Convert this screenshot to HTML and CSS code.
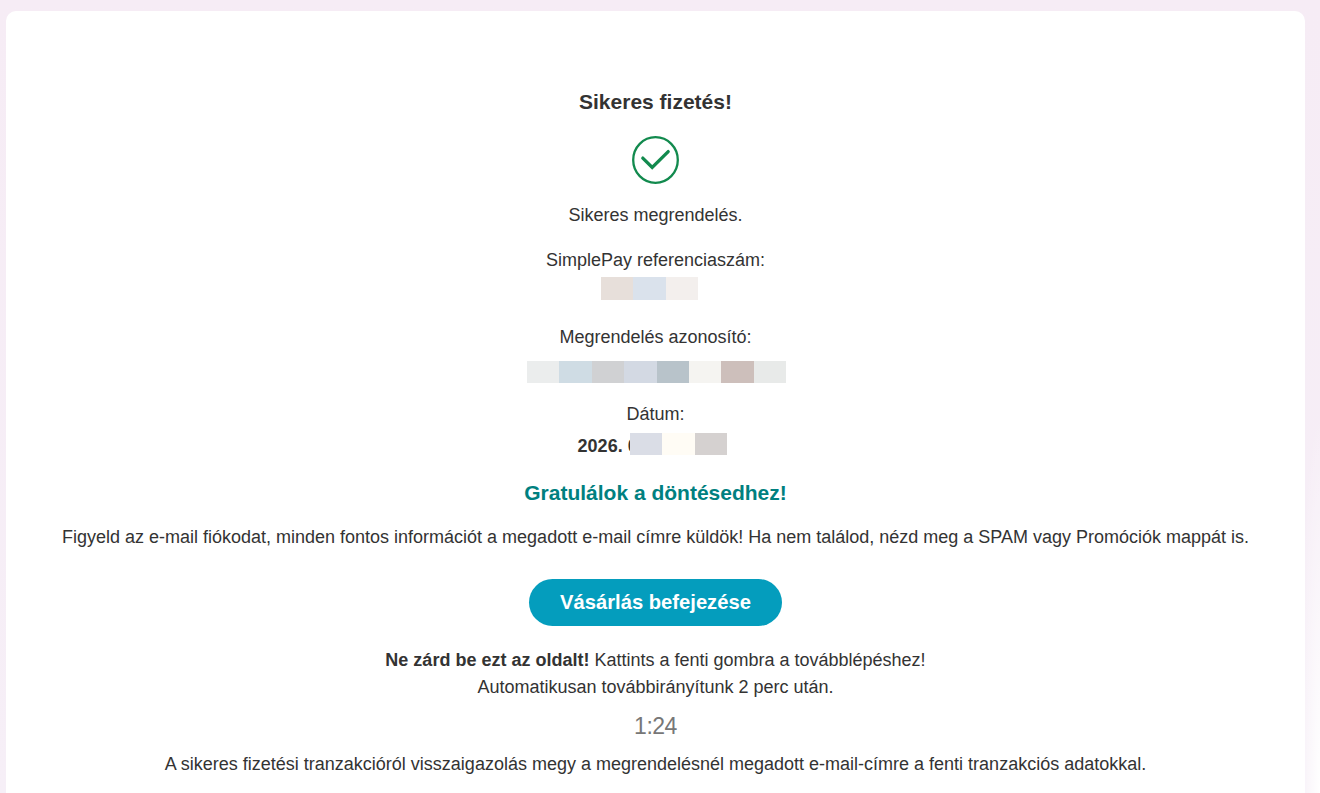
FILE: index.html
```
<!DOCTYPE html>
<html lang="hu">
<head>
  <meta charset="UTF-8">
  <meta name="viewport" content="width=device-width, initial-scale=1.0">
  <title>Sikeres fizetés</title>
  <link rel="stylesheet" href="styles.css">
</head>
<body>
  <main class="card">
    <h2 class="title">Sikeres fizetés!</h2>
    <svg class="check-icon" width="47" height="48" viewBox="0 0 47 48" fill="none">
      <ellipse cx="23.5" cy="24" rx="22.3" ry="22.8" stroke-width="2.3"/>
      <path d="M10.8 22.1l9.4 9.4L36.2 15.6" stroke-width="3.3" stroke-linecap="round" stroke-linejoin="miter"/>
    </svg>
    <p class="status">Sikeres megrendelés.</p>

    <p class="label">SimplePay referenciaszám:</p>
    <div class="mask mask-ref">
      <span class="c1"></span><span class="c2"></span><span class="c3"></span>
    </div>

    <p class="label label-order">Megrendelés azonosító:</p>
    <div class="mask mask-order">
      <span class="c4"></span><span class="c5"></span><span class="c6"></span><span class="c7"></span>
      <span class="c8"></span><span class="c9"></span><span class="c10"></span><span class="c11"></span>
    </div>

    <p class="label label-date">Dátum:</p>
    <div class="date">
      <strong>2026. 0</strong>
      <div class="mask mask-date">
        <span class="c12"></span><span class="c13"></span><span class="c14"></span>
      </div>
    </div>

    <h2 class="congrats">Gratulálok a döntésedhez!</h2>
    <p class="info">Figyeld az e-mail fiókodat, minden fontos információt a megadott e-mail címre küldök! Ha nem találod, nézd meg a SPAM vagy Promóciók mappát is.</p>

    <a href="#" class="btn">Vásárlás befejezése</a>

    <p class="notice"><strong>Ne zárd be ezt az oldalt!</strong> Kattints a fenti gombra a továbblépéshez!<br>Automatikusan továbbirányítunk 2 perc után.</p>
    <div class="timer">1:24</div>
    <p class="footer-text">A sikeres fizetési tranzakcióról visszaigazolás megy a megrendelésnél megadott e-mail-címre a fenti tranzakciós adatokkal.</p>
  </main>
</body>
</html>
```
FILE: styles.css
```
* { box-sizing: border-box; margin: 0; padding: 0; }

body {
  height: 100vh;
  padding: 11px 15px 0 6px;
  background:
    radial-gradient(ellipse 22px 380px at 100% 100%, #fff, rgba(255,255,255,0)),
    linear-gradient(to bottom, #f6ecf5, #f6eff7);
  font-family: "Liberation Sans", Arial, sans-serif;
  font-size: 18px;
  line-height: 27px;
  color: #333;
}

.card {
  display: flex;
  flex-direction: column;
  align-items: center;
  height: 100%;
  padding-top: 77px;
  background: #fff;
  border-radius: 10px 10px 0 0;
  text-align: center;
}

.title, .congrats {
  font-size: 21px;
  font-weight: bold;
}
.check-icon {
  flex: none;
  margin-top: 21px;
  stroke: #128a4e;
}
.status { margin-top: 18px; }
.label { margin-top: 18px; }
.label-order { margin-top: 24px; }
.label-date { margin-top: 18px; }

/* hidden order data */
.mask {
  display: flex;
  flex: none;
  height: 22px;
}
.mask span { flex: 1; }
.mask-ref {
  width: 97px;
  height: 23px;
  margin: 3px 12px 0 0;
}
.mask-order {
  width: 259px;
  margin: 10px 0 0 2px;
}
.mask-date {
  position: absolute;
  top: 0;
  right: 0;
  width: 97px;
}
.c1 { background: #e7dfda; }
.c2 { background: #dae2ec; }
.c3 { background: #f3efed; }
.c4 { background: #ebeded; }
.c5 { background: #cfdce4; }
.c6 { background: #d0d1d3; }
.c7 { background: #d3d9e3; }
.c8 { background: #b8c3ca; }
.c9 { background: #f5f4f1; }
.c10 { background: #cdbfbb; }
.c11 { background: #e8eae9; }
.c12 { background: #dadde6; }
.c13 { background: #fffcf5; }
.c14 { background: #d5d1d0; }

.date {
  position: relative;
  width: 150px;
  margin: 5px 7px 0 0;
  padding-left: 0.6px;
  text-align: left;
}

.congrats {
  margin-top: 19px;
  color: #008080;
}
.info { margin-top: 18px; }

.btn {
  width: 253px;
  height: 47px;
  margin-top: 28px;
  line-height: 46px;
  border-radius: 24px;
  background: #049dbd;
  color: #fff;
  font-size: 20.2px;
  font-weight: bold;
  text-decoration: none;
}
.notice { margin-top: 21px; }
.timer {
  margin-top: 12px;
  font-size: 23px;
  letter-spacing: -0.5px;
  color: #777;
}
.footer-text { margin-top: 11px; }
```
